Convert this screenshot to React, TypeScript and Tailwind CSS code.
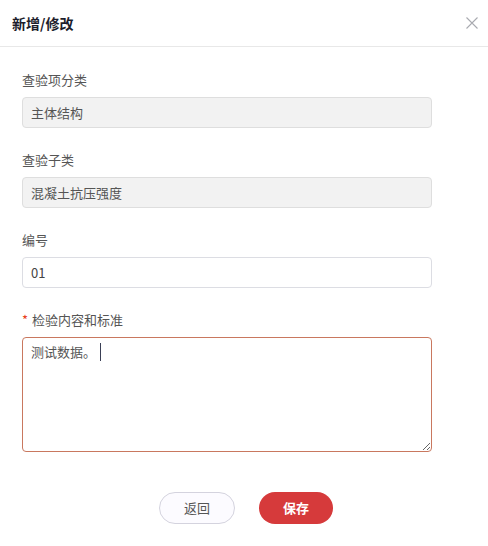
import React from "react";

const font = { fontFamily: '"Noto Sans CJK SC", "Noto Sans", sans-serif' };

function Label({ children, required }: { children: React.ReactNode; required?: boolean }) {
  return (
    <div className="h-5 mb-[7px] flex items-center text-[13px] text-[#555] leading-5">
      {required && <span className="text-[#e8401c] mr-[4px] text-[13px]">*</span>}
      {children}
    </div>
  );
}

export default function App() {
  return (
    <div className="w-[488px] h-[546px] bg-white" style={font}>
      <div className="h-[47px] border-b border-[#e8e8e8] flex items-center justify-between pl-3 pr-[9px]">
        <span className="text-[14px] font-bold text-[#1c1d2b]">新增/修改</span>
        <svg width="12" height="12" viewBox="0 0 12 12" className="mr-[1px]">
          <path d="M0.5 0.5 L11.5 11.5 M11.5 0.5 L0.5 11.5" stroke="#a9aab0" strokeWidth="1.1" />
        </svg>
      </div>
      <div className="pt-[23px] pl-[22px] pr-[56px]">
        <div className="mb-[22px]">
          <Label>查验项分类</Label>
          <input
            readOnly
            value="主体结构"
            className="w-full h-[31px] rounded-[4px] border border-[#dedede] bg-[#f2f2f2] px-[8px] text-[13px] text-[#555] outline-none"
          />
        </div>
        <div className="mb-[22px]">
          <Label>查验子类</Label>
          <input
            readOnly
            value="混凝土抗压强度"
            className="w-full h-[31px] rounded-[4px] border border-[#dedede] bg-[#f2f2f2] px-[8px] text-[13px] text-[#555] outline-none"
          />
        </div>
        <div className="mb-[22px]">
          <Label>编号</Label>
          <input
            readOnly
            value="01"
            className="w-full h-[31px] rounded-[4px] border border-[#dcdde3] bg-white px-[8px] text-[13px] text-[#444] outline-none"
          />
        </div>
        <div>
          <Label required>检验内容和标准</Label>
          <div className="relative">
            <textarea
              readOnly
              value="测试数据。"
              className="block w-full h-[115px] rounded-[4px] border border-[#c9785f] bg-white px-[8px] pt-[4px] text-[13px] leading-5 text-[#555] outline-none resize-y"
            />
            <span className="absolute left-[78px] top-[6px] w-px h-[18px] bg-[#3a3f55]" />
          </div>
        </div>
      </div>
      <div className="flex justify-center gap-6 mt-[40px] pl-[4px]">
        <button className="w-[76px] h-[32px] rounded-full border border-[#d4d3de] bg-[#fcfbff] text-[13px] text-[#555]">
          返回
        </button>
        <button className="w-[74px] h-[32px] rounded-full bg-[#d63a3b] text-[13px] font-bold text-white">
          保存
        </button>
      </div>
    </div>
  );
}
